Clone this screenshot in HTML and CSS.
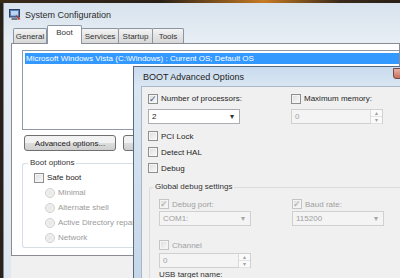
FILE: index.html
```html
<!DOCTYPE html>
<html lang="en">
<head>
  <meta charset="UTF-8" />
  <title>System Configuration</title>
  <link rel="stylesheet" href="styles.css">
</head>
<body>
  <div class="desktop"></div>
  <div class="window">
    <div class="titlebar">
      <svg class="appicon" width="12" height="12" viewBox="0 0 12 12">
        <rect x="0.5" y="0.5" width="10" height="7.5" fill="#5b7fb8" stroke="#2c3f66"/>
        <rect x="2" y="2" width="7" height="4.5" fill="#b9d3f0"/>
        <rect x="2.5" y="9" width="6" height="2" fill="#6f7a88"/>
        <path d="M6.5 5 L11.5 10 L9.5 11 Z" fill="#c0392b"/>
      </svg>
      <span class="title">System Configuration</span>
    </div>

    <div class="tabs">
      <div class="tab t-general">General</div>
      <div class="tab t-boot active">Boot</div>
      <div class="tab t-services">Services</div>
      <div class="tab t-startup">Startup</div>
      <div class="tab t-tools">Tools</div>
    </div>

    <div class="panel">
      <div class="listbox">
        <div class="item selected">Microsoft Windows Vista (C:\Windows) : Current OS; Default OS</div>
      </div>
      <div class="buttons">
        <button class="btn">Advanced options...</button>
        <button class="btn">Set as default</button>
      </div>
      <fieldset class="group">
        <legend>Boot options</legend>
        <label class="check"><span class="box"></span>Safe boot</label>
        <label class="radio"><span class="dot"></span>Minimal</label>
        <label class="radio"><span class="dot"></span>Alternate shell</label>
        <label class="radio"><span class="dot"></span>Active Directory repair</label>
        <label class="radio"><span class="dot"></span>Network</label>
      </fieldset>
    </div>
    <div class="footer"></div>
  </div>

  <div class="dialog">
    <div class="dlg-title">
      <span>BOOT Advanced Options</span>
      <span class="close"></span>
    </div>
    <div class="dlg-body">
      <div class="cols">
        <div class="col">
          <label class="check"><span class="box on">&#10003;</span>Number of processors:</label>
          <div class="select"><span>2</span><span class="arrow">&#9662;</span></div>
        </div>
        <div class="col">
          <label class="check"><span class="box"></span>Maximum memory:</label>
          <div class="spin off"><span>0</span><span class="spinbtns"><i>&#9652;</i><i>&#9662;</i></span></div>
        </div>
      </div>
      <div class="flags">
        <label class="check"><span class="box"></span>PCI Lock</label>
        <label class="check"><span class="box"></span>Detect HAL</label>
        <label class="check"><span class="box"></span>Debug</label>
      </div>
      <fieldset class="group dbg">
        <legend>Global debug settings</legend>
        <div class="cols">
          <div class="col">
            <label class="check off"><span class="box on">&#10003;</span>Debug port:</label>
            <div class="select off"><span>COM1:</span><span class="arrow">&#9662;</span></div>
            <label class="check off gap"><span class="box"></span>Channel</label>
            <div class="spin off"><span>0</span><span class="spinbtns"><i>&#9652;</i><i>&#9662;</i></span></div>
          </div>
          <div class="col">
            <label class="check off"><span class="box on">&#10003;</span>Baud rate:</label>
            <div class="select off"><span>115200</span><span class="arrow">&#9662;</span></div>
          </div>
        </div>
        <div class="cut">USB target name:</div>
      </fieldset>
    </div>
  </div>
</body>
</html>
```

FILE: styles.css
```css
body {
  margin: 0;
  width: 400px;
  height: 278px;
  overflow: hidden;
  position: relative;
  background: #2a2118;
  font-family: "Liberation Sans", Arial, sans-serif;
  font-size: 8px;
  color: #1e1e1e;
}
.desktop {
  height: 3px;
  background: linear-gradient(90deg, #3a2a1a, #2a2016 40%, #c77a22 66%, #3a2a1a 85%, #2a2016);
}
.window {
  margin-left: 3px;
  background: linear-gradient(#d8e3ee, #e8eef4 40px, #dfe7f0);
  height: 275px;
  border-left: 1px solid #7d8a99;
}
.titlebar {
  height: 23px;
  display: flex;
  align-items: center;
  padding-left: 5px;
  gap: 4px;
  box-sizing: border-box;
  padding-top: 1px;
}
.title {
  font-size: 9px;
  color: #2b2b2b;
}

.tabs {
  display: flex;
  padding-left: 9px;
  height: 17px;
  align-items: flex-end;
}
.tab {
  height: 15px;
  line-height: 16px;
  text-align: center;
  border: 1px solid #8c95a3;
  border-bottom: none;
  margin-right: -1px;
  background: linear-gradient(#f4f4f4, #e4e4e4 50%, #d8d8d8);
  color: #333;
  border-radius: 2px 2px 0 0;
  box-sizing: border-box;
}
.t-general { width: 34px; }
.t-boot { width: 35px; }
.t-services { width: 38px; }
.t-startup { width: 35px; }
.t-tools { width: 32px; }
.tab.active {
  height: 19px;
  background: #fff;
  line-height: 14px;
  position: relative;
  z-index: 1;
  margin-bottom: -1px;
  margin-left: 1px;
  margin-right: -1px;
}

.panel {
  margin-left: 7px;
  height: 213px;
  background: #fff;
  border: 1px solid #898c95;
  padding: 6px 0 0 10px;
  box-sizing: border-box;
}
.listbox {
  height: 80px;
  border: 1px solid #8e9aa8;
  border-right: none;
  padding: 2px 0 0 2px;
  box-sizing: border-box;
}
.item.selected {
  background: #3399ff;
  color: #fff;
  height: 11px;
  line-height: 11px;
  padding-left: 1px;
  white-space: nowrap;
}
.buttons {
  display: flex;
  gap: 7px;
  margin-top: 5px;
  padding-left: 2px;
}
.btn {
  font: inherit;
  width: 92px;
  height: 16px;
  padding: 0;
  border: 1px solid #707070;
  border-radius: 3px;
  background: linear-gradient(#f2f2f2 50%, #dddddd 51%, #cfcfcf);
  color: #222;
  white-space: nowrap;
  flex: none;
}
.group {
  margin: 7px 0 0 0;
  border: 1px solid #d5dfe5;
  border-radius: 3px;
  border-right: none;
  padding: 2px 0 0 11px;
  height: 90px;
  box-sizing: border-box;
}
.group legend {
  padding: 0 2px;
  margin-left: -6px;
  color: #333;
  line-height: 10px;
}
.check, .radio {
  display: flex;
  align-items: center;
  height: 15px;
  white-space: nowrap;
}
.box {
  width: 8px;
  height: 8px;
  border: 1px solid #8e8f8f;
  background: linear-gradient(135deg, #dcdcdc, #fbfbfb);
  margin-right: 3px;
  font-size: 9px;
  line-height: 8px;
  text-align: center;
  color: #3a4f86;
  box-shadow: inset 0 0 0 1px #f4f4f4;
  flex: none;
}
.radio {
  padding-left: 11px;
  color: #9a9a9a;
}
.dot {
  width: 10px;
  height: 10px;
  border-radius: 50%;
  border: 1px solid #cfcfcf;
  background: radial-gradient(#e6e6e6, #f6f6f6);
  margin-right: 3px;
  box-sizing: border-box;
}
.footer {
  height: 22px;
  margin-left: 7px;
  background: #f0f0f0;
}

.dialog {
  position: absolute;
  left: 133px;
  top: 66px;
  width: 290px;
  height: 230px;
  border: 1px solid #5a6a7e;
  background: linear-gradient(#c9dbee, #dae6f2 20px, #c3d5e8);
  padding: 0 0 0 7px;
  box-sizing: border-box;
}
.dlg-title {
  height: 19px;
  display: flex;
  align-items: center;
  font-size: 9px;
  color: #222;
  padding-left: 2px;
  position: relative;
}
.close {
  position: absolute;
  left: 252px;
  top: 1px;
  width: 12px;
  height: 9px;
  border: 1px solid #6f4c48;
  border-radius: 0 0 3px 3px;
  background: linear-gradient(#e8b2a5, #c96e5c);
}
.dlg-body {
  background: #f0f0f0;
  height: 211px;
  border-top: 1px solid #a9b8c8;
  border-left: 1px solid #a9b8c8;
  padding: 4px 0 0 6px;
  box-sizing: border-box;
}
.cols {
  display: flex;
  gap: 51px;
}
.col { width: 92px; }
.col .check { margin-bottom: 3px; }
.select, .spin {
  width: 92px;
  height: 15px;
  border: 1px solid #abadb3;
  background: #fff;
  display: flex;
  justify-content: space-between;
  align-items: center;
  padding-left: 3px;
  box-sizing: border-box;
}
.arrow {
  font-size: 8px;
  color: #333;
  margin-right: 5px;
}
.off {
  color: #a0a0a0;
}
.select.off, .spin.off {
  background: #f4f4f4;
  border-color: #d0d0d0;
}
.select.off .arrow { color: #a5a5a5; }
.check.off .box {
  color: #a8a8a8;
  border-color: #c4c4c4;
}
.spinbtns {
  display: flex;
  flex-direction: column;
  height: 13px;
  width: 11px;
  border-left: 1px solid #dadada;
}
.spinbtns i {
  font-style: normal;
  font-size: 6px;
  line-height: 6px;
  height: 6px;
  text-align: center;
  color: #a0a0a0;
  border-bottom: 1px solid #e2e2e2;
  background: #fafafa;
}
.flags {
  margin-top: 4px;
}
.flags .check {
  height: 16px;
}
.group.dbg {
  margin: 6px 0 0 1px;
  padding: 5px 0 0 9px;
  height: 110px;
  border-color: #dcdcdc;
}
.group.dbg .cols { gap: 41px; }
.group.dbg .col .check { height: 14px; margin-bottom: 0; }
.check.gap { margin-top: 12px; margin-bottom: 1px !important; }
.cut {
  margin-top: 2px;
  color: #333;
}
```
